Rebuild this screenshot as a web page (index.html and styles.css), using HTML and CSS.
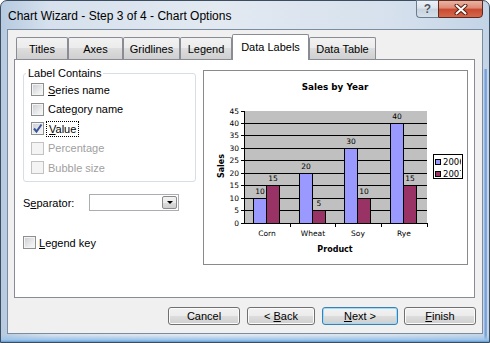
FILE: index.html
```html
<!DOCTYPE html>
<html lang="en">

<head>
    <meta charset="UTF-8">
    <title>Chart Wizard - Step 3 of 4 - Chart Options</title>
    <link rel="stylesheet" href="styles.css">
</head>

<body>
    <div class="window">
        <div class="titlebar">
            <span class="title">Chart Wizard - Step 3 of 4 - Chart Options</span>
            <div class="caption">
                <span class="cap-help">?</span>
                <span class="cap-close">
                    <svg width="14" height="11" viewBox="0 0 14 11">
                        <path d="M2.5 1.5 L11.5 9.5 M11.5 1.5 L2.5 9.5" stroke="#5a1e12" stroke-width="4" stroke-linecap="round" />
                        <path d="M2.5 1.5 L11.5 9.5 M11.5 1.5 L2.5 9.5" stroke="#ffffff" stroke-width="2" stroke-linecap="round" />
                    </svg>
                </span>
            </div>
        </div>

        <div class="client">
            <div class="tabs">
                <span class="tab">Titles</span>
                <span class="tab">Axes</span>
                <span class="tab">Gridlines</span>
                <span class="tab">Legend</span>
                <span class="tab active">Data Labels</span>
                <span class="tab">Data Table</span>
            </div>

            <div class="panel">
                <div class="left-col">
                    <fieldset class="group">
                        <legend>Label Contains</legend>
                        <div class="check"><span class="box"></span><span><u>S</u>eries name</span></div>
                        <div class="check"><span class="box"></span><span>Cate<u>g</u>ory name</span></div>
                        <div class="check">
                            <span class="box">
                                <svg width="11" height="11" viewBox="0 0 11 11">
                                    <path d="M2 5.5 L4.5 8.5 L9.5 1.5" fill="none" stroke="#3a559a" stroke-width="2" />
                                </svg>
                            </span>
                            <span class="focus"><u>V</u>alue</span>
                        </div>
                        <div class="check disabled"><span class="box"></span><span>Percentage</span></div>
                        <div class="check disabled"><span class="box"></span><span>Bubble size</span></div>
                    </fieldset>

                    <div class="sep-row">
                        <span class="sep-label">S<u>e</u>parator:</span>
                        <span class="combo"><span class="combo-btn"></span></span>
                    </div>

                    <div class="check legend-key"><span class="box"></span><span><u>L</u>egend key</span></div>
                </div>

                <div class="chart">
                    <svg width="263" height="193" viewBox="0 0 263 193">
                        <text class="ch-title" x="131" y="19" text-anchor="middle">Sales by Year</text>

                        <!-- plot area -->
                        <rect x="40" y="40" width="183" height="112" fill="#c0c0c0" />
                        <g stroke="#000" stroke-width="1">
                            <line x1="40" y1="139.5" x2="223" y2="139.5" />
                            <line x1="40" y1="127.5" x2="223" y2="127.5" />
                            <line x1="40" y1="114.5" x2="223" y2="114.5" />
                            <line x1="40" y1="102.5" x2="223" y2="102.5" />
                            <line x1="40" y1="89.5" x2="223" y2="89.5" />
                            <line x1="40" y1="77.5" x2="223" y2="77.5" />
                            <line x1="40" y1="64.5" x2="223" y2="64.5" />
                            <line x1="40" y1="52.5" x2="223" y2="52.5" />
                            <!-- axes -->
                            <line x1="40.5" y1="40" x2="40.5" y2="153" />
                            <line x1="40" y1="152.5" x2="224" y2="152.5" />
                            <!-- y ticks -->
                            <line x1="37" y1="40.5" x2="40" y2="40.5" />
                            <line x1="37" y1="52.5" x2="40" y2="52.5" />
                            <line x1="37" y1="64.5" x2="40" y2="64.5" />
                            <line x1="37" y1="77.5" x2="40" y2="77.5" />
                            <line x1="37" y1="89.5" x2="40" y2="89.5" />
                            <line x1="37" y1="102.5" x2="40" y2="102.5" />
                            <line x1="37" y1="114.5" x2="40" y2="114.5" />
                            <line x1="37" y1="127.5" x2="40" y2="127.5" />
                            <line x1="37" y1="139.5" x2="40" y2="139.5" />
                            <line x1="37" y1="152.5" x2="40" y2="152.5" />
                            <!-- x ticks -->
                            <line x1="86.5" y1="153" x2="86.5" y2="156" />
                            <line x1="131.5" y1="153" x2="131.5" y2="156" />
                            <line x1="177.5" y1="153" x2="177.5" y2="156" />
                            <line x1="223.5" y1="152" x2="223.5" y2="156" />
                        </g>

                        <g class="ch-small" text-anchor="end">
                            <text x="35" y="43">45</text>
                            <text x="35" y="55">40</text>
                            <text x="35" y="67">35</text>
                            <text x="35" y="80">30</text>
                            <text x="35" y="92">25</text>
                            <text x="35" y="105">20</text>
                            <text x="35" y="117">15</text>
                            <text x="35" y="130">10</text>
                            <text x="35" y="142">5</text>
                            <text x="35" y="155">0</text>
                        </g>

                        <!-- bars -->
                        <g stroke="#000" stroke-width="1">
                            <rect x="49.5" y="127.5" width="13" height="25" fill="#9999ff" />
                            <rect x="62.5" y="114.5" width="13" height="38" fill="#993366" />
                            <rect x="95.5" y="102.5" width="13" height="50" fill="#9999ff" />
                            <rect x="108.5" y="139.5" width="13" height="13" fill="#993366" />
                            <rect x="140.5" y="77.5" width="13" height="75" fill="#9999ff" />
                            <rect x="153.5" y="127.5" width="13" height="25" fill="#993366" />
                            <rect x="186.5" y="52.5" width="13" height="100" fill="#9999ff" />
                            <rect x="199.5" y="114.5" width="13" height="38" fill="#993366" />
                        </g>

                        <g class="ch-small" text-anchor="middle">
                            <text x="56" y="123">10</text>
                            <text x="69" y="110">15</text>
                            <text x="102" y="98">20</text>
                            <text x="115" y="135">5</text>
                            <text x="147" y="73">30</text>
                            <text x="160" y="123">10</text>
                            <text x="193" y="48">40</text>
                            <text x="206" y="110">15</text>

                            <text x="63" y="165">Corn</text>
                            <text x="109" y="165">Wheat</text>
                            <text x="154" y="165">Soy</text>
                            <text x="200" y="165">Rye</text>
                        </g>

                        <text class="ch-axis" x="131" y="181" text-anchor="middle">Product</text>
                        <text class="ch-axis" x="20" y="95" text-anchor="middle" transform="rotate(-90 20 95)">Sales</text>

                        <!-- legend -->
                        <clipPath id="legend-clip">
                            <rect x="229" y="83" width="28" height="25" />
                        </clipPath>
                        <rect x="229.5" y="83.5" width="29" height="24" fill="#fff" stroke="#000" />
                        <g clip-path="url(#legend-clip)">
                            <rect x="231.5" y="88.5" width="5" height="5" fill="#9999ff" stroke="#000" />
                            <rect x="231.5" y="100.5" width="5" height="5" fill="#993366" stroke="#000" />
                            <text class="ch-legend" x="239" y="94">2006</text>
                            <text class="ch-legend" x="239" y="106">2007</text>
                        </g>
                    </svg>
                </div>
            </div>

            <div class="buttons">
                <span class="btn btn-cancel">Cancel</span>
                <span class="btn btn-back">&lt; <u>B</u>ack</span>
                <span class="btn btn-next default"><u>N</u>ext &gt;</span>
                <span class="btn btn-finish"><u>F</u>inish</span>
            </div>
        </div>
    </div>
</body>

</html>
```

FILE: styles.css
```css
* {
    box-sizing: border-box;
}

body {
    margin: 0;
    font-family: "Liberation Sans", Arial, sans-serif;
    font-size: 11px;
    color: #000;
    background: #fff;
}

u {
    text-decoration-thickness: 1px;
    text-underline-offset: 1px;
}

/* window frame */
.window {
    width: 490px;
    height: 343px;
    display: flex;
    flex-direction: column;
    padding: 0 6px 8px 6px;
    border: 1px solid #3d4d60;
    border-radius: 7px 7px 0 0;
    background:
        linear-gradient(to top, #5f9ad2 0, #9cc4ea 2px, rgba(200, 220, 240, 0) 7px),
        linear-gradient(to left, rgba(0, 0, 0, 0) 2px, #86aee0 2px, #6f9bd6 4px, rgba(0, 0, 0, 0) 5px) right bottom / 100% 80% no-repeat,
        linear-gradient(to right, #b6cae0, #d6e1ed 10%, #e2e9f1 45%, #d6e1ed 80%, #c3d4e7);
}

.titlebar {
    height: 28px;
    display: flex;
    align-items: flex-start;
}

.title {
    padding: 8px 0 0 1px;
    font-size: 12px;
    color: #000;
}

.caption {
    margin-left: auto;
    margin-top: -1px;
    display: flex;
}

.cap-help {
    width: 22px;
    height: 18px;
    border: 1px solid #6c7c8f;
    border-right: none;
    border-radius: 0 0 0 4px;
    background: linear-gradient(#eef2f7, #dbe3ec 45%, #c6d2df 50%, #d6e0ea);
    text-align: center;
    font-weight: bold;
    font-size: 12px;
    line-height: 16px;
    color: #4b5563;
    text-shadow: 0 0 1px #fff;
}

.cap-close {
    width: 45px;
    height: 18px;
    border: 1px solid #5b2a22;
    border-radius: 0 0 4px 0;
    background: linear-gradient(#eab3a3, #dc8a74 45%, #c9492f 50%, #d4684c);
    display: flex;
    align-items: center;
    justify-content: center;
}

/* client area */
.client {
    flex: 1;
    display: flex;
    flex-direction: column;
    background: #f0f0f0;
    border: 1px solid #7b8ca0;
    padding: 4px 7px 0 6px;
}

.tabs {
    display: flex;
    align-items: flex-end;
    margin-left: 2px;
}

.tab {
    height: 22px;
    padding-top: 5px;
    text-align: center;
    border: 1px solid #898c95;
    border-bottom: none;
    border-radius: 2px 2px 0 0;
    background: linear-gradient(#f2f2f2, #ebebeb 50%, #dddddd 50%, #cfcfcf);
}

.tab:nth-child(1) { width: 52px; }
.tab:nth-child(2) { width: 55px; }
.tab:nth-child(3) { width: 57px; }
.tab:nth-child(4) { width: 52px; }
.tab:nth-child(5) { width: 77px; }
.tab:nth-child(6) { width: 67px; }

.tab.active {
    height: 26px;
    padding-top: 6px;
    margin-bottom: -1px;
    background: #fff;
    position: relative;
    z-index: 2;
}

.panel {
    flex: 1;
    display: flex;
    align-items: flex-start;
    padding: 7px 6px 0 8px;
    background: #fff;
    border: 1px solid #898c95;
}

.left-col {
    width: 173px;
    display: flex;
    flex-direction: column;
}

.group {
    margin: 0;
    height: 115px;
    padding: 0 0 0 7px;
    border: 1px solid #d5dfe5;
    border-radius: 3px;
}

.group legend {
    padding: 0 2px;
    margin-left: -5px;
    line-height: 13px;
}

.check {
    height: 19.5px;
    display: flex;
    align-items: center;
    gap: 4px;
}

.box {
    width: 13px;
    height: 13px;
    flex: none;
    border: 1px solid #8e8f8f;
    background: linear-gradient(135deg, #c9ccd1, #eeeff0 70%, #f8f8f8);
    box-shadow: inset 0 0 0 1px #f4f4f4;
    display: flex;
    align-items: center;
    justify-content: center;
}

.check.disabled {
    color: #a0a0a0;
}

.check.disabled .box {
    border-color: #c2c2c2;
    background: #f4f4f4;
}

.focus {
    outline: 1px dotted #000;
    outline-offset: 1px;
    padding: 0 1px;
}

.sep-row {
    margin-top: 12px;
    height: 17px;
    display: flex;
    align-items: center;
}

.sep-label {
    width: 66px;
}

.combo {
    width: 90px;
    height: 17px;
    border: 1px solid #abadb3;
    background: #fff;
    display: flex;
    justify-content: flex-end;
    padding: 1px;
}

.combo-btn {
    width: 15px;
    border: 1px solid #8a8a8a;
    border-radius: 2px;
    background: linear-gradient(#f2f2f2, #ebebeb 50%, #dddddd 50%, #cfcfcf);
    display: flex;
    align-items: center;
    justify-content: center;
}

.combo-btn::after {
    content: "";
    border-left: 3px solid transparent;
    border-right: 3px solid transparent;
    border-top: 3px solid #000;
}

.legend-key {
    margin-top: 22px;
    gap: 3px;
}

/* chart */
.chart {
    margin-left: auto;
    margin-top: 3px;
    width: 265px;
    height: 195px;
    border: 1px solid #8a8a8a;
    background: #fff;
}

.chart svg {
    display: block;
}

.ch-title {
    font-family: "DejaVu Sans", sans-serif;
    font-weight: bold;
    font-size: 8.8px;
}

.ch-axis {
    font-family: "DejaVu Sans", sans-serif;
    font-weight: bold;
    font-size: 8px;
}

.ch-small {
    font-family: "DejaVu Sans", sans-serif;
    font-size: 7.5px;
}

.ch-legend {
    font-family: "DejaVu Sans", sans-serif;
    font-size: 8.5px;
}

/* buttons */
.buttons {
    display: flex;
    justify-content: flex-end;
    margin: 9px -1px 8px 0;
}

.btn {
    height: 18px;
    margin-left: 7px;
    border: 1px solid #707070;
    border-radius: 3px;
    background: linear-gradient(#f2f2f2, #ebebeb 50%, #dddddd 50%, #cfcfcf);
    box-shadow: inset 0 0 0 1px #fbfbfb;
    text-align: center;
    line-height: 16px;
}

.btn-cancel { width: 72px; }
.btn-back { width: 68px; }
.btn-next { width: 76px; }
.btn-finish { width: 72px; margin-left: 6px; }

.btn.default {
    border-color: #3c7fb1;
    box-shadow: inset 0 0 0 1px #9fdcf8;
}
```
